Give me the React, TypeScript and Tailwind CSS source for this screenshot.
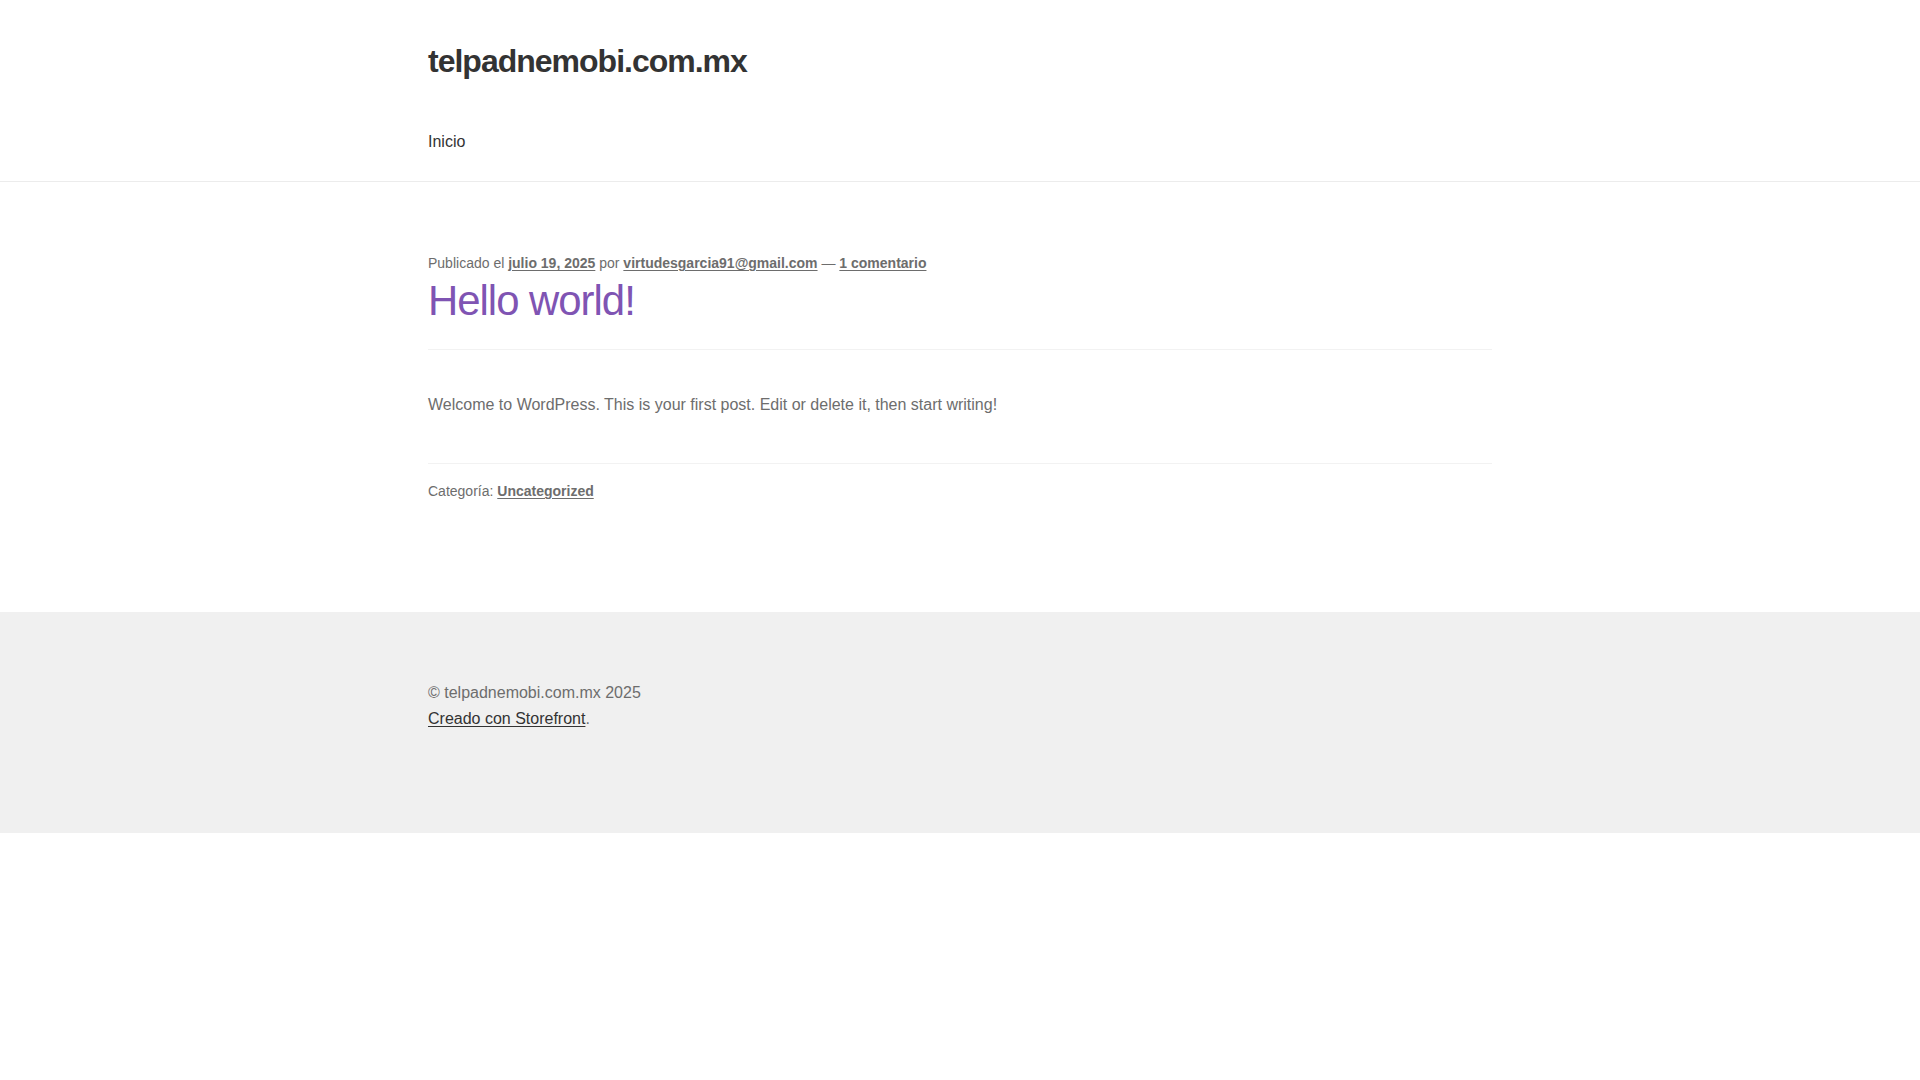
import React from 'react';

const sans = { fontFamily: '"Liberation Sans", Arial, sans-serif' };

function MetaLink({ children }: { children: React.ReactNode }) {
  return <a href="#" className="font-semibold text-[#6d6d6d] underline underline-offset-2">{children}</a>;
}

export default function App() {
  return (
    <div className="min-h-[1080px] bg-white text-[#6d6d6d]" style={sans}>
      {/* Header */}
      <header className="border-b border-[#ececec]">
        <div className="mx-auto w-[1064px] pt-[43px] pb-[26px]">
          <h1 className="text-[32px] font-bold leading-[36px] tracking-[-1px] text-[#333333]">
            <a href="#">telpadnemobi.com.mx</a>
          </h1>
          <nav className="mt-[50px]">
            <a href="#" className="text-[16px] leading-[26px] text-[#333333]">Inicio</a>
          </nav>
        </div>
      </header>

      {/* Post */}
      <main className="mx-auto w-[1064px] pt-[70px] pb-[110px]">
        <article>
          <div className="border-b border-[#f2f2f2] pb-[21px]">
            <div className="text-[14px] leading-[22px]">
              Publicado el <MetaLink>julio 19, 2025</MetaLink> por{' '}
              <MetaLink>virtudesgarcia91@gmail.com</MetaLink> — <MetaLink>1 comentario</MetaLink>
            </div>
            <h2 className="text-[41.89px] leading-[54px] tracking-[-1px] text-[#7f54b3]">
              <a href="#">Hello world!</a>
            </h2>
          </div>
          <div className="border-b border-[#f2f2f2] pt-[42px] pb-[45px]">
            <p className="text-[16px] leading-[26px]">
              Welcome to WordPress. This is your first post. Edit or delete it, then start writing!
            </p>
          </div>
          <div className="pt-[16px] text-[14px] leading-[22px]">
            Categoría: <MetaLink>Uncategorized</MetaLink>
          </div>
        </article>
      </main>

      {/* Footer */}
      <footer className="bg-[#f0f0f0]">
        <div className="mx-auto w-[1064px] pt-[68px] pb-[101px] text-[16px] leading-[26px]">
          <div>© telpadnemobi.com.mx 2025</div>
          <div>
            <a href="#" className="text-[#333333] underline underline-offset-2">Creado con Storefront</a>.
          </div>
        </div>
      </footer>
    </div>
  );
}
